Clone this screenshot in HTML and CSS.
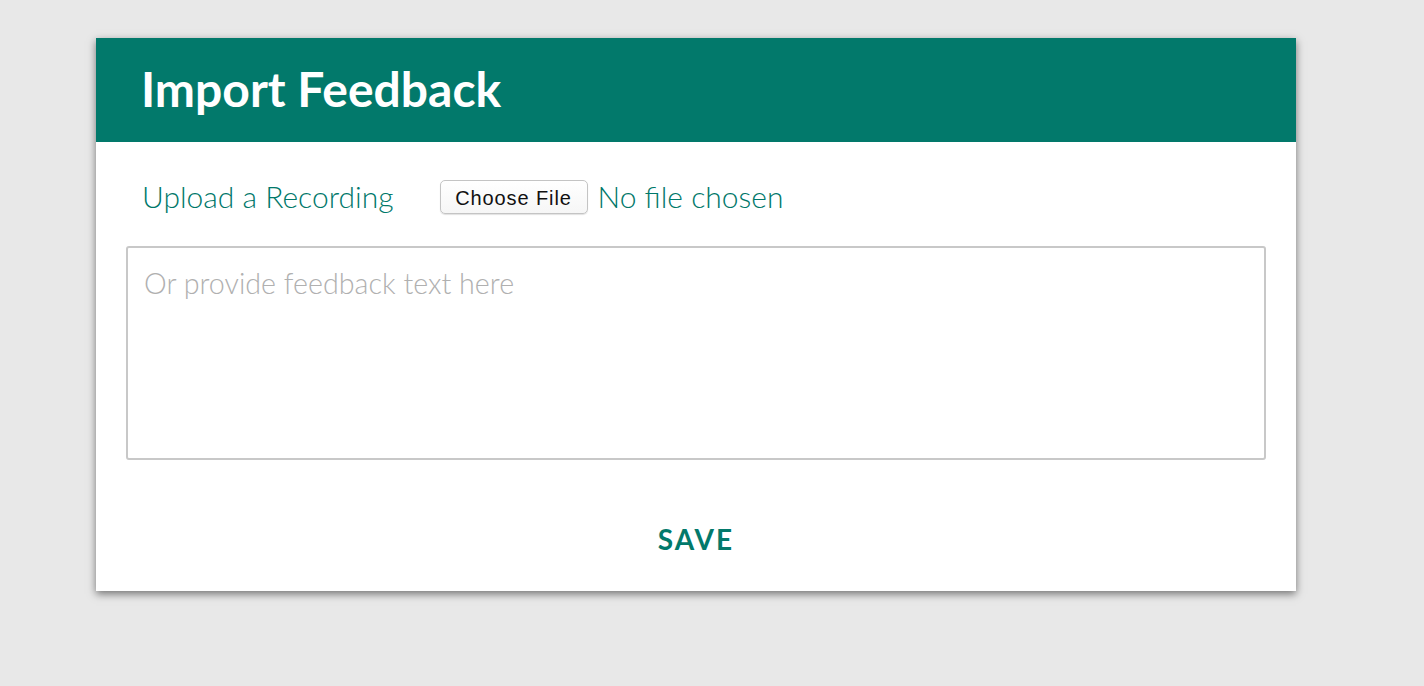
FILE: index.html
```html
<!DOCTYPE html>
<html>
<head>
<meta charset="utf-8">
<link rel="stylesheet" href="styles.css">
</head>
<body>
<div class="card">
  <div class="card-header">
    <h1 class="title">Import Feedback</h1>
  </div>
  <div class="card-body">
    <div class="upload-row">
      <span class="upload-label">Upload a Recording</span>
      <span class="file-btn">Choose File</span>
      <span class="file-status">No file chosen</span>
    </div>
    <div class="textarea">Or provide feedback text here</div>
    <div class="actions">
      <span class="save">SAVE</span>
    </div>
  </div>
</div>
</body>
</html>
```
FILE: styles.css
```css
html, body {
  margin: 0;
  padding: 0;
  background: #e8e8e8;
  font-family: Lato, "Open Sans", sans-serif;
}
body {
  box-sizing: border-box;
  min-height: 100vh;
  padding: 38px 0 0 96px;
}
.card {
  width: 1200px;
  height: 553px;
  background: #ffffff;
  box-shadow: 0 3px 8px rgba(0, 0, 0, 0.5);
  display: flex;
  flex-direction: column;
}
.card-header {
  height: 104px;
  background: #02796b;
  display: flex;
  align-items: center;
  padding-left: 45px;
}
.title {
  margin: 0;
  color: #ffffff;
  font-weight: 700;
  font-size: 48px;
  line-height: 1;
  padding-bottom: 2px;
}
.card-body {
  flex: 1;
  display: flex;
  flex-direction: column;
  padding: 38px 30px 0 30px;
}
.upload-row {
  display: flex;
  align-items: center;
  height: 34px;
  padding-left: 16px;
}
.upload-label {
  color: #00786a;
  font-size: 30px;
  font-weight: 300;
  margin-right: 46px;
  padding-bottom: 3px;
}
.file-btn {
  box-sizing: border-box;
  width: 148px;
  height: 34px;
  border: 1px solid #c4c4c4;
  border-radius: 5px;
  background: linear-gradient(#ffffff, #f6f6f6);
  box-shadow: 0 1px 1px rgba(0, 0, 0, 0.12);
  font-family: "Liberation Sans", Arial, sans-serif;
  font-size: 20px;
  letter-spacing: 0.9px;
  color: #111111;
  display: flex;
  align-items: center;
  justify-content: center;
  padding-top: 2px;
  margin-right: 10px;
}
.file-status {
  color: #00786a;
  font-size: 30px;
  font-weight: 300;
  padding-bottom: 3px;
}
.textarea {
  margin-top: 32px;
  box-sizing: border-box;
  height: 214px;
  border: 2px solid #c8c8c8;
  border-radius: 3px;
  padding: 18px 16px;
  color: #b0b0b0;
  font-size: 28.7px;
  font-weight: 300;
  line-height: 1.2;
}
.actions {
  display: flex;
  justify-content: center;
  padding-top: 62px;
}
.save {
  color: #02796b;
  font-weight: 700;
  font-size: 28px;
  letter-spacing: 2px;
}
```
